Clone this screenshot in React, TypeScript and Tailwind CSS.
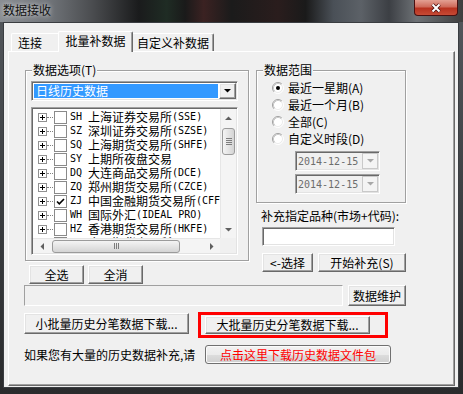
import React from 'react';

const F = "font-['Noto_Sans_CJK_SC','Noto_Sans',sans-serif]";
const MONO = "font-['DejaVu_Sans_Mono','Liberation_Mono',monospace]";
const RAISED =
  'bg-[#f0f0f0] border border-t-white border-l-white border-r-[#696969] border-b-[#696969] shadow-[inset_-1px_-1px_0_#a0a0a0,inset_1px_1px_0_#e3e3e3]';
const SUNKEN =
  'border border-t-[#a0a0a0] border-l-[#a0a0a0] border-r-white border-b-white shadow-[inset_1px_1px_0_#696969,inset_-1px_-1px_0_#e3e3e3]';
const GROUP = 'relative border border-[#a0a0a0] shadow-[inset_1px_1px_0_#fff,1px_1px_0_#fff]';
const LEGEND = 'absolute -top-[8px] left-[6px] px-[1px] bg-[#f0f0f0] leading-[14px] whitespace-nowrap';

interface Exchange {
  code: string;
  name: string;
  tail: string;
  checked?: boolean;
}

const exchanges: Exchange[] = [
  { code: 'SH', name: '上海证券交易所', tail: '(SSE)' },
  { code: 'SZ', name: '深圳证券交易所', tail: '(SZSE)' },
  { code: 'SQ', name: '上海期货交易所', tail: '(SHFE)' },
  { code: 'SY', name: '上期所夜盘交易', tail: '' },
  { code: 'DQ', name: '大连商品交易所', tail: '(DCE)' },
  { code: 'ZQ', name: '郑州期货交易所', tail: '(CZCE)' },
  { code: 'ZJ', name: '中国金融期货交易所', tail: '(CFFEX)', checked: true },
  { code: 'WH', name: '国际外汇', tail: '(IDEAL PRO)' },
  { code: 'HZ', name: '香港期货交易所', tail: '(HKFE)' },
  { code: 'GZ', name: '广州期货交易所', tail: '(GFEX)' },
];

function Btn({ className, children }: { className: string; children: React.ReactNode }) {
  return (
    <button className={`${RAISED} flex items-center justify-center leading-[14px] text-black whitespace-nowrap ${className}`}>
      {children}
    </button>
  );
}

function Radio({ checked }: { checked?: boolean }) {
  return (
    <svg width="12" height="12" viewBox="0 0 12 12" className="shrink-0">
      <circle cx="6" cy="6" r="5" fill="#fff" />
      <path d="M2.11 9.89 A5.5 5.5 0 0 1 9.89 2.11" fill="none" stroke="#a0a0a0" />
      <path d="M9.89 2.11 A5.5 5.5 0 0 1 2.11 9.89" fill="none" stroke="#fff" />
      <path d="M2.82 9.18 A4.5 4.5 0 0 1 9.18 2.82" fill="none" stroke="#c8c8c8" />
      <path d="M9.18 2.82 A4.5 4.5 0 0 1 2.82 9.18" fill="none" stroke="#ececec" />
      {checked && <circle cx="6" cy="6" r="2" fill="#000" />}
    </svg>
  );
}

function Arrow({ dir, color = '#606060' }: { dir: 'up' | 'down' | 'left' | 'right'; color?: string }) {
  const d = {
    up: 'M0 4 L3.5 0.5 L7 4 Z',
    down: 'M0 0 L7 0 L3.5 3.5 Z',
    left: 'M4 0 L4 7 L0.5 3.5 Z',
    right: 'M0 0 L3.5 3.5 L0 7 Z',
  }[dir];
  const vert = dir === 'up' || dir === 'down';
  return (
    <svg width={vert ? 7 : 4} height={vert ? 4 : 7} viewBox={vert ? '0 0 7 4' : '0 0 4 7'}>
      <path d={d} fill={color} />
    </svg>
  );
}

function Row({ ex }: { ex: Exchange }) {
  return (
    <div className="flex items-center h-[14px] whitespace-nowrap">
      <svg width="9" height="9" viewBox="0 0 9 9" className="ml-[5px] shrink-0">
        <rect x="0.5" y="0.5" width="8" height="8" fill="#fff" stroke="#919191" />
        <path d="M2 4.5h5M4.5 2v5" stroke="#000" />
      </svg>
      <span className="w-[6px] border-t border-dotted border-[#808080] shrink-0" />
      <span className="w-[13px] h-[13px] ml-[1px] border border-[#8a8a8a] bg-white shrink-0 flex items-center justify-center">
        {ex.checked && (
          <svg width="9" height="9" viewBox="0 0 9 9">
            <path d="M1 4.5 L3.3 6.8 L8 2" fill="none" stroke="#000" strokeWidth="1.6" />
          </svg>
        )}
      </span>
      <span className={`${MONO} text-[10px] ml-[3px]`}>{ex.code}</span>
      <span className="ml-[6px] leading-[14px]">{ex.name}</span>
      <span className={`${MONO} text-[10px]`}>{ex.tail}</span>
    </div>
  );
}

function DateBox() {
  return (
    <div className={`${SUNKEN} ml-[38px] w-[85px] h-[20px] flex items-center bg-[#f0f0f0]`}>
      <span className={`${MONO} text-[10px] text-[#6d6d6d] pl-[2px]`}>2014-12-15</span>
      <span className="ml-auto mr-[1px] w-[16px] h-[16px] border border-[#c9c9c9] bg-[#f4f4f4] flex items-center justify-center">
        <Arrow dir="down" color="#a8a8a8" />
      </span>
    </div>
  );
}

export default function App() {
  return (
    <div
      className={`w-[463px] h-[394px] flex flex-col overflow-hidden bg-[linear-gradient(180deg,#54585d_0%,#3d4043_50%,#2a2b2d_100%)] ${F} text-[12px] text-black`}
    >
      {/* title bar */}
      <div className="h-[22px] flex shrink-0 bg-[linear-gradient(90deg,#8a8e93_0%,#73777c_10%,#4a4c4f_20%,#1a1b1c_30%,#1f2c24_36%,#1a1a1a_40%,#3b2222_44%,#1b1b1b_50%,#2a1d1d_60%,#1a1a1a_66%,#4a5057_72%,#5c6167_78%,#3c3f44_84%,#6e7276_90%,#3e3e3e_100%)]">
        <span className="pl-[3px] leading-[20px] text-[12px] text-[#101010] [text-shadow:0_0_5px_rgba(255,255,255,0.9)]">
          数据接收
        </span>
        <div className="ml-auto mr-[5px] w-[44px] h-[16px] rounded-b-[4px] border border-t-0 border-[#4a1010] bg-[linear-gradient(180deg,#e3a093_0%,#cf6a5a_45%,#b8321f_55%,#c64a35_100%)] flex items-center justify-center">
          <svg width="14" height="10" viewBox="0 0 14 10">
            <path d="M3.5 1.5 L10.5 8.5 M10.5 1.5 L3.5 8.5" stroke="#4a1010" strokeWidth="3.6" />
            <path d="M3.5 1.5 L10.5 8.5 M10.5 1.5 L3.5 8.5" stroke="#fff" strokeWidth="2" />
          </svg>
        </div>
      </div>

      {/* client area */}
      <div className="ml-[3px] w-[456px] h-[366px] border border-[#3a3d41] bg-[#f0f0f0] flex flex-col">
        {/* tabs */}
        <div className="relative z-10 h-[29px] flex items-end pl-[7px]">
          <div className="mb-[1px] w-[47px] h-[18px] pl-[6px] flex items-center leading-[14px] border-t border-l border-white rounded-tl-[2px]">
            连接
          </div>
          <div className="w-[75px] h-[21px] pb-[2px] flex items-center justify-center leading-[14px] bg-[#f0f0f0] border-t border-l border-r border-t-white border-l-white border-r-[#696969] rounded-t-[2px] shadow-[inset_-1px_0_0_#a0a0a0]">
            批量补数据
          </div>
          <div className="mb-[1px] w-[81px] h-[18px] flex items-center justify-center leading-[14px] border-t border-r border-t-white border-r-[#696969] rounded-tr-[2px] shadow-[inset_-1px_0_0_#a0a0a0]">
            自定义补数据
          </div>
        </div>

        {/* tab panel */}
        <div className="ml-[4px] -mt-[1px] w-[447px] h-[335px] flex flex-col pl-[15px] border border-t-white border-l-white border-r-[#696969] border-b-[#696969] shadow-[inset_-1px_-1px_0_#a0a0a0]">
          <div className="mt-[18px] flex">
            {/* left column */}
            <div className="ml-[1px] w-[224px] flex flex-col">
              <div className={`${GROUP} h-[191px] pt-[10px] flex flex-col`}>
                <span className={LEGEND}>数据选项(T)</span>
                <div className={`${SUNKEN} ml-[5px] w-[207px] h-[20px] p-[1px] flex bg-white`}>
                  <span className="flex-1 my-[1px] mx-[1px] bg-[#3399ff] text-white leading-[14px] pl-[2px]">日线历史数据</span>
                  <span className={`${RAISED} w-[17px] flex items-center justify-center`}>
                    <Arrow dir="down" color="#000" />
                  </span>
                </div>
                <div className={`${SUNKEN} ml-[5px] mt-[6px] w-[207px] h-[148px] p-[1px] bg-white flex flex-col`}>
                  <div className="h-[129px] flex">
                    <div className="flex-1 overflow-hidden pt-[1px] leading-[14px]">
                      {exchanges.map((ex) => (
                        <Row key={ex.code} ex={ex} />
                      ))}
                    </div>
                    <div className="w-[16px] flex flex-col items-center bg-[#f4f4f4] border-l border-[#e6e6e6]">
                      <div className="h-[17px] flex items-center justify-center">
                        <Arrow dir="up" />
                      </div>
                      <div className="mt-[2px] w-[13px] h-[27px] rounded-[3px] border border-[#9b9b9b] bg-[linear-gradient(90deg,#f4f4f4,#e4e4e4_50%,#d4d4d4)] flex flex-col items-center justify-center gap-[1px]">
                        <span className="w-[6px] h-[1px] bg-[#7d7d7d]" />
                        <span className="w-[6px] h-[1px] bg-[#7d7d7d]" />
                        <span className="w-[6px] h-[1px] bg-[#7d7d7d]" />
                        <span className="w-[6px] h-[1px] bg-[#7d7d7d]" />
                      </div>
                      <div className="flex-1" />
                      <div className="h-[17px] flex items-center justify-center">
                        <Arrow dir="down" />
                      </div>
                    </div>
                  </div>
                  <div className="h-[15px] flex">
                    <div className="flex-1 flex items-center bg-[#f4f4f4] border-t border-[#e6e6e6]">
                      <div className="w-[17px] flex items-center justify-center">
                        <Arrow dir="left" />
                      </div>
                      <div className="ml-[2px] w-[128px] h-[13px] rounded-[3px] border border-[#9b9b9b] bg-[linear-gradient(180deg,#f4f4f4,#e4e4e4_50%,#d4d4d4)] flex items-center justify-center gap-[1px]">
                        <span className="w-[1px] h-[6px] bg-[#7d7d7d]" />
                        <span className="w-[1px] h-[6px] bg-[#7d7d7d]" />
                        <span className="w-[1px] h-[6px] bg-[#7d7d7d]" />
                      </div>
                      <div className="flex-1" />
                      <div className="w-[17px] flex items-center justify-center">
                        <Arrow dir="right" />
                      </div>
                    </div>
                    <div className="w-[16px] bg-[#f0f0f0]" />
                  </div>
                </div>
              </div>
              <div className="mt-[4px] ml-[4px] flex gap-[4px]">
                <Btn className="w-[55px] h-[19px]">全选</Btn>
                <Btn className="w-[55px] h-[19px]">全消</Btn>
              </div>
            </div>

            {/* right column */}
            <div className="ml-[7px] w-[150px] flex flex-col">
              <div className={`${GROUP} h-[133px] pt-[8px] flex flex-col`}>
                <span className={LEGEND}>数据范围</span>
                {[
                  { label: '最近一星期(A)', checked: true },
                  { label: '最近一个月(B)' },
                  { label: '全部(C)' },
                  { label: '自定义时段(D)' },
                ].map((r) => (
                  <div key={r.label} className="h-[17px] pl-[15px] flex items-center gap-[4px] leading-[14px]">
                    <Radio checked={r.checked} />
                    <span>{r.label}</span>
                  </div>
                ))}
                <div className="mt-[4px]">
                  <DateBox />
                </div>
                <div className="mt-[3px]">
                  <DateBox />
                </div>
              </div>
              <span className="mt-[6px] ml-[5px] leading-[14px] whitespace-nowrap">补充指定品种(市场+代码):</span>
              <div className={`${SUNKEN} mt-[4px] ml-[6px] w-[133px] h-[19px] bg-white`} />
              <div className="mt-[7px] ml-[6px] flex gap-[5px]">
                <Btn className="w-[51px] h-[19px]">&lt;-选择</Btn>
                <Btn className="w-[88px] h-[19px]">开始补充(S)</Btn>
              </div>
            </div>
          </div>

          {/* progress / maintenance */}
          <div className="mt-[1px] flex">
            <div className="w-[319px] h-[21px] border border-t-[#a0a0a0] border-l-[#a0a0a0] border-r-white border-b-white bg-[#f0f0f0]" />
            <Btn className="ml-[5px] w-[58px] h-[21px]">数据维护</Btn>
          </div>

          {/* tick data downloads */}
          <div className="mt-[6px] flex items-start">
            <Btn className="mt-[1px] w-[165px] h-[21px]">小批量历史分笔数据下载...</Btn>
            <div className="ml-[9px] w-[190px] h-[26px] border-[3px] border-[#ff0000] pl-[4px] pt-[1px]">
              <Btn className="w-[165px] h-[18px]">大批量历史分笔数据下载...</Btn>
            </div>
          </div>

          {/* package download */}
          <div className="mt-[7px] h-[19px] flex items-center">
            <span className="w-[181px] leading-[14px] whitespace-nowrap">如果您有大量的历史数据补充,请</span>
            <button className="w-[186px] h-[19px] rounded-[3px] border border-[#707070] bg-[linear-gradient(180deg,#f2f2f2_0%,#ebebeb_50%,#dddddd_51%,#cfcfcf_100%)] shadow-[inset_0_0_0_1px_#fbfbfb] text-[#ff0000] leading-[14px] flex items-center justify-center">
              点击这里下载历史数据文件包
            </button>
          </div>
        </div>
      </div>
    </div>
  );
}
